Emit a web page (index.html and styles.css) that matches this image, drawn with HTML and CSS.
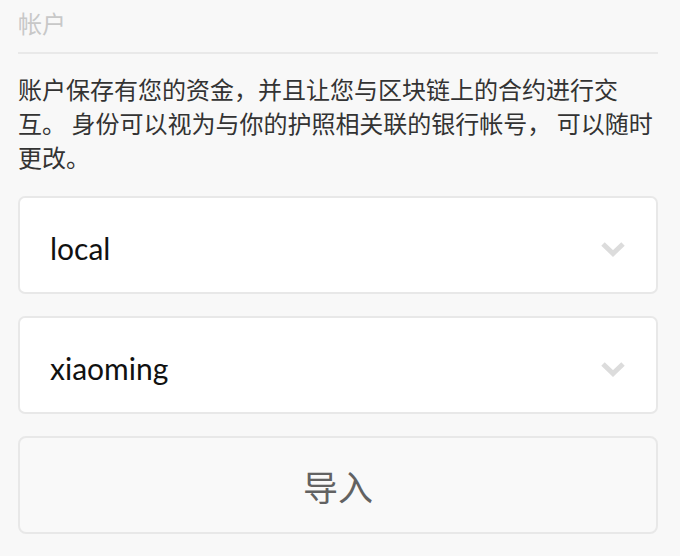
FILE: index.html
```html
<!DOCTYPE html>
<html lang="zh-CN">
<head>
<meta charset="utf-8">
<title>帐户</title>
<link rel="stylesheet" href="styles.css">
</head>
<body>
<main class="page">
  <h1 class="title">帐户</h1>
  <p class="desc">账户保存有您的资金，并且让您与区块链上的合约进行交互。 身份可以视为与你的护照相关联的银行帐号， 可以随时更改。</p>
  <div class="select">
    <span class="select-value">local</span>
    <svg class="chevron" width="26" height="16" viewBox="0 0 26 16"><polyline points="3,3 13,12.5 23,3" fill="none" stroke="#dcdcdc" stroke-width="5" stroke-linecap="butt" stroke-linejoin="miter"/></svg>
  </div>
  <div class="select">
    <span class="select-value">xiaoming</span>
    <svg class="chevron" width="26" height="16" viewBox="0 0 26 16"><polyline points="3,3 13,12.5 23,3" fill="none" stroke="#dcdcdc" stroke-width="5" stroke-linecap="butt" stroke-linejoin="miter"/></svg>
  </div>
  <button class="btn" type="button">导入</button>
</main>
</body>
</html>
```
FILE: styles.css
```css
html, body {
  margin: 0;
  padding: 0;
  background: #f8f8f8;
}
.page {
  padding: 5px 22px 0 18px;
  display: flex;
  flex-direction: column;
  font-family: "Noto Sans CJK SC", sans-serif;
}
.title {
  margin: 0;
  font-size: 24px;
  font-weight: normal;
  line-height: 36px;
  color: #c8c8c8;
  padding-bottom: 11px;
  border-bottom: 2px solid #e9e9e9;
}
.desc {
  margin: 18px 0 0 0;
  font-size: 24px;
  line-height: 34px;
  color: #333333;
}
.select {
  margin-top: 22px;
  height: 94px;
  background: #ffffff;
  border: 2px solid #e8e8e8;
  border-radius: 7px;
  display: flex;
  align-items: center;
  justify-content: space-between;
  padding: 0 30px 0 30px;
}
.select-value {
  font-family: "Lato", sans-serif;
  font-size: 30px;
  color: #111;
  padding-top: 6px;
}
.chevron {
  display: block;
  margin-top: 8px;
}
.btn {
  margin-top: 22px;
  height: 98px;
  background: #f9f9f9;
  border: 2px solid #e8e8e8;
  border-radius: 8px;
  font-family: "Noto Sans CJK SC", sans-serif;
  font-size: 35px;
  color: #626262;
  padding: 0;
}
```
